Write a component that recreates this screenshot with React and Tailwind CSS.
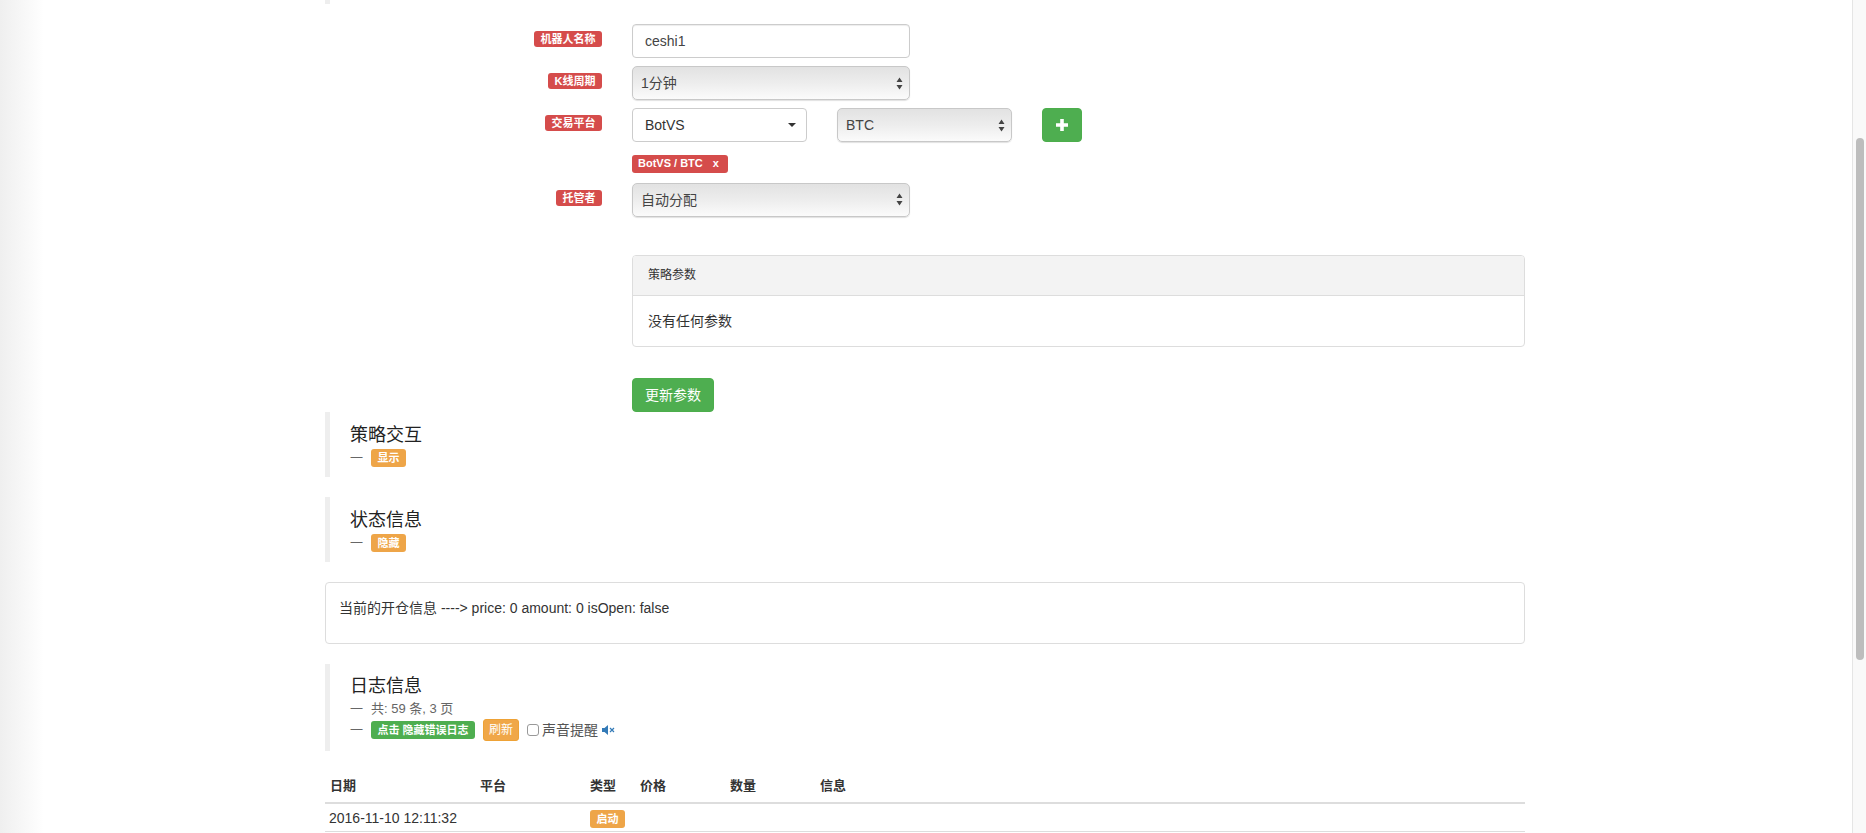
import React from "react";

const FONT = "font-['Liberation_Sans','Noto_Sans_CJK_SC',sans-serif]";

function Label({ children }) {
  return (
    <span className="inline-block h-4 rounded-[3px] bg-[#d54c4b] px-[6.5px] text-[11px] font-bold leading-4 text-white">
      {children}
    </span>
  );
}

function Arrows() {
  return (
    <svg width="7" height="13" viewBox="0 0 7 13" className="pointer-events-none absolute right-[7px] top-[10.5px]">
      <path d="M3.5 0.5 L6.5 5 H0.5 Z M0.5 8 H6.5 L3.5 12.5 Z" fill="#444" />
    </svg>
  );
}

function NativeSelect({ value, className }) {
  return (
    <div className={`relative h-[34px] ${className}`}>
      <select
        defaultValue={value}
        className="h-full w-full appearance-none rounded-[5px] border border-[#c8c8c8] bg-gradient-to-b from-[#e2e2e2] via-[#ededed] to-[#fbfbfb] pl-2 text-sm text-[#444] shadow-[0_1px_1px_rgba(0,0,0,0.12)] outline-none"
      >
        <option>{value}</option>
      </select>
      <Arrows />
    </div>
  );
}

function Row({ label, children }) {
  return (
    <div className="mt-2 flex gap-[30px] first:mt-0">
      <div className="flex w-[277px] shrink-0 justify-end pt-[7px]">
        <Label>{label}</Label>
      </div>
      {children}
    </div>
  );
}

function Badge({ children, className = "bg-[#eea548]" }) {
  return (
    <span className={`inline-block h-[18px] rounded-[3px] px-[6.5px] text-[11px] font-bold leading-[18px] text-white ${className}`}>
      {children}
    </span>
  );
}

function Section({ title, className = "", children }) {
  return (
    <section className={`border-l-[5px] border-[#eee] pl-5 ${className}`}>
      <h3 className="text-[18px] font-normal leading-5 text-[#222]">{title}</h3>
      {children}
    </section>
  );
}

function Dash() {
  return <span className="inline-block w-[21px] text-[13px] text-[#666]">一</span>;
}

function VolumeOff() {
  return (
    <svg width="13" height="10" viewBox="0 0 13 10" aria-hidden="true">
      <path d="M0 3 H2.5 L6 0 V10 L2.5 7 H0 Z" fill="#337ab7" />
      <path d="M8 3 L12 7 M12 3 L8 7" stroke="#337ab7" strokeWidth="1.2" fill="none" />
    </svg>
  );
}

const COLS = ["w-[150px]", "w-[110px]", "w-[50px]", "w-[90px]", "w-[90px]", ""];
const HEADERS = ["日期", "平台", "类型", "价格", "数量", "信息"];

export default function App() {
  return (
    <div className={`flex h-[833px] w-[1866px] overflow-hidden bg-white text-sm text-[#333] ${FONT}`}>
      <div className="w-[325px] shrink-0">
        <div className="h-full w-[44px] bg-gradient-to-r from-[#efefef] to-white" />
      </div>

      <main className="w-[1200px] shrink-0">
        <div className="h-1 w-[5px] bg-[#eee]" />

        <div className="pt-5">
          <Row label="机器人名称">
            <input
              defaultValue="ceshi1"
              className="h-[34px] w-[278px] rounded-[4px] border border-[#ccc] bg-white px-3 text-sm text-[#444] shadow-[inset_0_1px_1px_rgba(0,0,0,0.075)] outline-none"
            />
          </Row>
          <Row label="K线周期">
            <NativeSelect value="1分钟" className="w-[278px]" />
          </Row>
          <Row label="交易平台">
            <div className="flex items-start">
              <button className="flex h-[34px] w-[175px] items-center justify-between rounded-[4px] border border-[#ccc] bg-white pl-3 pr-[10px] text-sm text-[#333]">
                BotVS
                <span className="h-0 w-0 border-x-4 border-t-4 border-x-transparent border-t-[#333]" />
              </button>
              <NativeSelect value="BTC" className="ml-[30px] w-[175px]" />
              <button className="ml-[30px] flex h-[34px] w-10 items-center justify-center rounded-[4px] border border-[#4cae4c] bg-[#4eae50]">
                <svg width="14" height="14" viewBox="0 0 14 14" aria-hidden="true">
                  <path d="M7 1 V13 M1 7 H13" stroke="#fff" strokeWidth="3.6" fill="none" />
                </svg>
              </button>
            </div>
          </Row>
          <div className="mt-[10px] pl-[307px]">
            <span className="inline-flex h-[18px] w-[96px] items-center rounded-[3px] bg-[#d54c4b] pl-[6px] text-[11px] font-bold text-white">
              BotVS / BTC
              <span className="ml-[10px]">x</span>
            </span>
          </div>
          <div className="mt-[10px]">
            <Row label="托管者">
              <NativeSelect value="自动分配" className="w-[278px]" />
            </Row>
          </div>
        </div>

        <div className="mt-[38px] pl-[307px]">
          <div className="h-[92px] w-[893px] overflow-hidden rounded-[4px] border border-[#ddd]">
            <div className="flex h-10 items-center border-b border-[#ddd] bg-[#f3f3f3] pl-[15px] text-xs text-[#333]">策略参数</div>
            <div className="flex h-[50px] items-center pl-[15px]">没有任何参数</div>
          </div>
          <button className="mt-[31px] block h-[34px] w-[82px] rounded-[4px] border border-[#4cae4c] bg-[#4eae50] text-sm text-white">更新参数</button>
        </div>

        <Section title="策略交互" className="h-[65px] pt-[13px]">
          <div className="mt-[4px] flex h-[18px] items-center">
            <Dash />
            <Badge>显示</Badge>
          </div>
        </Section>

        <Section title="状态信息" className="mt-5 h-[65px] pt-[13px]">
          <div className="mt-[4px] flex h-[18px] items-center">
            <Dash />
            <Badge>隐藏</Badge>
          </div>
        </Section>

        <div className="mt-5 h-[62px] rounded-[4px] border border-[#ddd] pl-[13px] pt-[15px] leading-5">
          当前的开仓信息 ----&gt; price: 0 amount: 0 isOpen: false
        </div>

        <Section title="日志信息" className="mt-5 h-[87px] pt-3">
          <div className="mt-[3px] flex h-5 items-center text-[13px] text-[#666]">
            <Dash />
            共: 59 条, 3 页
          </div>
          <div className="flex h-[22px] items-center">
            <Dash />
            <Badge className="w-[104px] bg-[#4eae50] whitespace-nowrap">点击 隐藏错误日志</Badge>
            <button className="ml-2 h-[22px] w-9 rounded-[3px] border border-[#eea236] bg-[#f0a748] text-xs text-white">刷新</button>
            <input type="checkbox" readOnly className="ml-2 h-3 w-3 appearance-none rounded-[3px] border border-[#999] bg-white" />
            <span className="ml-[3px] text-sm text-[#555]">声音提醒</span>
            <span className="ml-1 flex items-center"><VolumeOff /></span>
          </div>
        </Section>

        <table className="mt-5 w-full table-fixed border-collapse text-left">
          <thead>
            <tr className="border-b-2 border-[#ddd]">
              {HEADERS.map((h, i) => (
                <th key={h} className={`pb-[6px] pl-[5px] pt-[5px] text-[13px] font-bold leading-5 ${COLS[i]}`}>{h}</th>
              ))}
            </tr>
          </thead>
          <tbody>
            <tr className="border-b border-[#ddd]">
              <td className="h-[29px] pl-[4px] align-middle">2016-11-10 12:11:32</td>
              <td />
              <td className="pl-[5px] align-middle">
                <Badge>启动</Badge>
              </td>
              <td />
              <td />
              <td />
            </tr>
          </tbody>
        </table>
      </main>

      <div className="flex-1" />

      <aside className="w-[14px] shrink-0 border-l border-[#e5e5e5] bg-[#f9f9f9] pt-[138px]">
        <div className="ml-[3px] h-[522px] w-2 rounded-[4px] bg-[#bdbdbd]" />
      </aside>
    </div>
  );
}
